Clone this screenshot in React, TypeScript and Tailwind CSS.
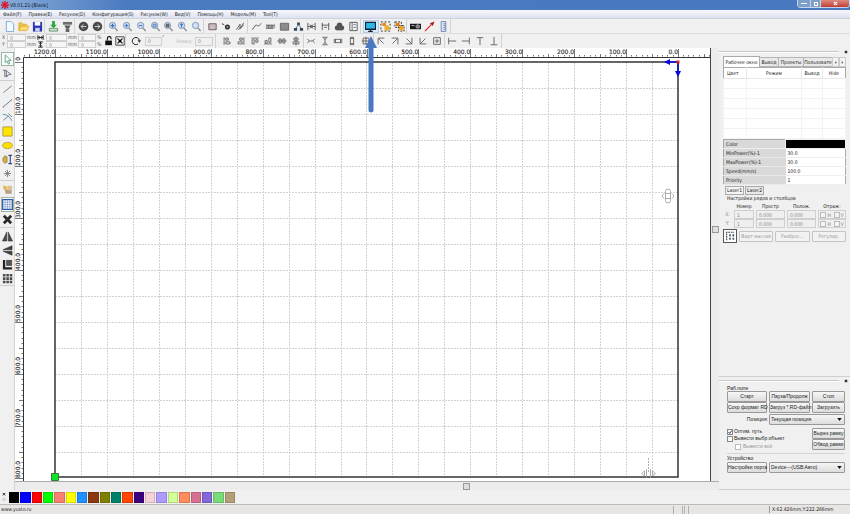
import type { ReactNode } from "react";

const line = { fill: "none", stroke: "#555", strokeWidth: 1 };

const lens = (color: string, inner?: ReactNode) => (
  <g>
    <path d="M7.500 7.500L10.500 10.800" stroke="#8a8f98" strokeWidth="1.600" />
    <circle cx="5" cy="4.800" r="3.400" fill="#cfe0f4" stroke="#7f92b0" />
    <g stroke={color} fill="none">{inner}</g>
  </g>
);

const ICONS: Record<string, ReactNode> = {
  new: <path d="M2.500 .5h5l3 3v8h-8z" fill="#f2faff" stroke="#77a9d6" />,
  open: <g><path d="M1 10V2h3l1 1.500h4V6" fill="#f4c542" stroke="#d9a32b" strokeWidth=".8" /><path d="M1 10.500l2-5h9l-2.500 5z" fill="#ffdc73" stroke="#d9a32b" strokeWidth=".8" /></g>,
  save: <g><path d="M1 1h10v10.500H1z" fill="#2b36b5" /><path d="M3 1h6v4H3z" fill="#fff" /><path d="M3.500 7.500h5v4h-5z" fill="#c9d0ee" /></g>,
  import: <g><path d="M4.500 0h3v4h2.200L6 7.800 2.300 4h2.200z" fill="#27a844" /><path d="M1.500 8h9v3h-9z" fill="#cfe3cf" stroke="#3f7d4a" strokeWidth=".8" /></g>,
  export: <g><path d="M1 1h10v3H1z" fill="#6d6d6d" /><path d="M2.500 5h7L7.500 8h-3z" fill="#555" /><path d="M4 8h4v4H4z" fill="#666" /></g>,
  undo: <g><circle cx="6" cy="6" r="5.200" fill="#4b4b4b" /><path d="M9 6H3.500M5.800 3.600L3.400 6l2.400 2.400" fill="none" stroke="#ddd" /></g>,
  redo: <g><circle cx="6" cy="6" r="5.200" fill="#4b4b4b" /><path d="M3 6h5.500M6.200 3.600L8.600 6 6.200 8.400" fill="none" stroke="#ddd" /></g>,
  z1: lens("#2f6fc4", <path d="M5 3v4M3 5h4" strokeWidth="1.400" />),
  z2: lens("#2f6fc4", <path d="M5 3v4M3 5h4" />),
  z3: lens("#2f6fc4", <path d="M3 5h4" />),
  z4: lens("#3b74b8", <path d="M3.500 3.500h3v3h-3z" />),
  z5: lens("#555", <path d="M3.500 3.500h3v3h-3z" fill="#777" />),
  z6: lens("#2563c0", <path d="M5 3v4M3.400 4.500L5 3l1.600 1.500" />),
  z7: lens("#9ab"),
  frame: <path d="M2 3h8v6.500H2z" fill="#c9bcc2" stroke="#6d5560" />,
  dot: <g><path d="M1 3l2.500 1" stroke="#333" /><circle cx="7" cy="6.500" r="2.800" fill="#333" /><circle cx="7" cy="6.500" r="1" fill="#aaa" /></g>,
  hatch: <path d="M1.500 9.500l4-6v5l4-6.500M3.500 9.500l6-5" {...line} />,
  curve: <path d="M1 9c2.500 0 2.500-4.500 4.500-4.500S8 7.500 11 2.500" {...line} />,
  bmp: <g><path d="M1 4.500h10v3.500H1z" fill="#aaa" /><path d="M1 4.500h10M1 8h8M4 4.500v3M7.500 4.500v3" stroke="#555" strokeWidth=".9" /></g>,
  gray: <path d="M1.500 2.500h9v7.500h-9z" fill="#8c8c8c" stroke="#666" />,
  tree: <g fill="#345"><path d="M4.500 1.500h3v3h-3zM1 7.500h3.500v3H1zM7.500 7.500H11v3H7.500z" /><path d="M6 4L3 8M6 4l3 4" stroke="#4a758a" /></g>,
  join: <path d="M2 2v8M10 2v8M2 6h8M4 4l3 2-3 2M8 4L5 6l3 2" {...line} />,
  joinh: <path d="M2.500 2v8M9.500 2v8M2 4.500h8M4.500 7h3" {...line} />,
  cloud: <g fill="#555"><circle cx="6" cy="4.500" r="3" /><circle cx="3.500" cy="7.500" r="2.700" /><circle cx="8.500" cy="7.500" r="2.700" /><path d="M3 8h6v2.200H3z" /></g>,
  card: <g><path d="M2 1.500h8v9H2z" fill="#f4f4f4" stroke="#555" /><path d="M4.500 2v8M6 4h2.500M6 7h2.500" stroke="#667" /></g>,
  monitor: <g><path d="M.5 1.500h11v7.500H.5z" fill="#29b8e8" stroke="#123" strokeWidth="1.400" /><path d="M6 9v2M3.500 11.300h5" stroke="#123" strokeWidth="1.300" /></g>,
  group: <g><path d="M1 1h10v10H1z" fill="none" stroke="#222" strokeDasharray="2 2" /><path d="M2.500 2h4v3.500h-4z" fill="#e98a1d" /><circle cx="7.500" cy="7.500" r="2.800" fill="#f1ae26" /></g>,
  ungroup: <g><path d="M1 1h7v6H1zM5 5h6v6H5z" fill="none" stroke="#222" strokeDasharray="2 1.500" /><path d="M2 2h4v3.500H2z" fill="#e07d18" /><circle cx="8" cy="8" r="2.600" fill="#f1a31f" /></g>,
  machine: <g><path d="M0 3h12v6H0z" fill="#181818" /><circle cx="8.500" cy="6" r="2" fill="#777" stroke="#ddd" strokeWidth=".6" /><path d="M1.500 5h3.500" stroke="#bbb" /></g>,
  laser: <g><path d="M1 11l7-7" stroke="#e02525" strokeWidth="1.300" /><path d="M6.500 2.500L11.500 .5 9.500 5.500z" fill="#a12" /></g>,
  ruler: <g><path d="M3.500 .5h5v11h-5z" fill="#dce6fa" stroke="#7383b5" /><path d="M6 3h2M6 5h2M6 7h2M6 9h2" stroke="#567" strokeWidth=".8" /></g>,
  al: <path d="M2.500 1.500v9M4.500 2.500h3v2.500h-3zM4.500 7h5v2.500h-5z" {...line} />,
  ar: <path d="M9.500 1.500v9M4.500 2.500h3v2.500h-3zM2.500 7h5v2.500h-5z" {...line} />,
  at: <path d="M1.500 2.500h9M2.500 4.500h2.500v5H2.500zM7 4.500h2.500v3H7z" {...line} />,
  ab: <path d="M1.500 9.500h9M2.500 5.500h2.500v3H2.500zM7 2.500h2.500v5H7z" {...line} />,
  ach: <path d="M.5 6h11M2.500 3.500h2.500v5H2.500zM7 3.500h2.500v5H7z" {...line} />,
  acv: <path d="M6 .5v11M3.500 2.500h5v2.500h-5zM2.500 7h7v2.500h-7z" {...line} />,
  dh: <path d="M1.500 3.500L4 6 1.500 8.500M10.500 3.500L8 6l2.500 2.500M4 6h4" {...line} />,
  dv: <path d="M3 1.500h6M3 10.500h6M6 4v4M4 2l2 2.500L8 2M4 10l2-2.500L8 10" {...line} />,
  sw: <path d="M1.500 4h9v4h-9zM3 4v4M9 4v4" {...line} />,
  sh: <path d="M4 1.500h4v9H4zM4 3h4M4 9h4" {...line} />,
  same: <path d="M2.500 2.500h7v7h-7zM6 1v10M1 6h10" {...line} />,
  nw: <path d="M2.500 10V2.500H10M3 3l6 6" {...line} />,
  ne: <path d="M2 2.500h7.500V10M9 3L3 9" {...line} />,
  se: <path d="M2 9.500h7.500V2M9 9L3 3" {...line} />,
  sw2: <path d="M2.500 2v7.500H10M3 9l6-6" {...line} />,
  ctr: <path d="M2 2h8v8H2zM6 3.500v5M3.500 6h5" {...line} />,
  tl: <path d="M2 2v8M2 6h9" {...line} />,
  tr: <path d="M10 2v8M10 6H1" {...line} />,
  tt: <path d="M2 2h8M6 2v9" {...line} />,
  tb: <path d="M2 10.500h8M6 10V1" {...line} />,
  lock: <g><path d="M1.500 5.500h8V11h-8z" fill="#111" /><path d="M4 5.500V3a2.200 2.200 0 0 1 4.500 0v1" fill="none" stroke="#111" strokeWidth="1.300" /></g>,
  anchor: <g><path d="M1 1h10v10H1z" fill="#fff" stroke="#222" /><path d="M3 3l6 6M9 3L3 9" stroke="#222" strokeWidth="1.300" /><path d="M4.500 4.500h3v3h-3z" fill="#000" /></g>,
  rotate: <g><path d="M8.500 9.500A4.300 4.300 0 1 1 10 5" fill="none" stroke="#222" strokeWidth="1.200" /><path d="M8 5h4l-2 3z" fill="#222" /></g>,
  warr: <path d="M1.500 2v8M10.500 2v8M2 6h8M4.500 4L2.500 6l2 2M7.500 4l2 2-2 2" fill="none" stroke="#111" strokeWidth="1.500" />,
  harr: <path d="M2 1.500h8M2 10.500h8M6 2v8M4 4.500l2-2 2 2M4 7.500l2 2 2-2" fill="none" stroke="#111" strokeWidth="1.500" />,
  pick: <path d="M3.500 1v8.500l2-2 1.500 3.500 1.500-.7L7 7h3z" fill="#fff" stroke="#4e9a72" strokeWidth=".9" />,
  node: <path d="M1 2.500h4M3 2.500v7l2-1.500M4.500 3l5.500 4-3.500.5L5 10z" fill="none" stroke="#5c6674" strokeWidth=".9" />,
  seg: <path d="M1.500 9.500l9-7.500" stroke="#6f7f95" strokeWidth="1" />,
  poly: <path d="M1 10l9.500-8M1 10h1M10 2h1" stroke="#65758c" strokeWidth="1" />,
  bezier: <g fill="none"><path d="M1 2.500c6 .5 8 4 9.500 7" stroke="#4d87a6" /><path d="M1.500 9l6-5M7 1.500l4 4" stroke="#6e8293" /></g>,
  rect: <path d="M1 1h10v10H1z" fill="#ffe500" stroke="#b09a3f" />,
  ellipse: <ellipse cx="6" cy="6" rx="5.200" ry="3.300" fill="#ffe100" stroke="#c09c35" />,
  text: <g><path d="M1 5l2-3 2.500 1v6L3 10 1 8z" fill="#d9ae3c" stroke="#78713f" strokeWidth=".7" /><path d="M7 1.500h4M9 1.500v9M7 10.500h4" stroke="#2c4788" strokeWidth="1.200" /></g>,
  star: <path d="M6 2v8M2 6h8M3.300 3.300l5.400 5.400M8.700 3.300L3.300 8.700" stroke="#777" strokeWidth=".9" />,
  camera: <g><path d="M1 1.500l4 1 1 3-4 1z" fill="#e8b54d" /><path d="M3 6h7.500v4.500H4z" fill="#b5a084" /><path d="M6 2h5v5H6z" fill="#dbc28e" /></g>,
  grid: <g><path d="M.7 .7h10.600v10.600H.7z" fill="#fff" stroke="#2b59ad" strokeWidth="1.300" /><path d="M3.500 1v10M6 1v10M8.500 1v10M1 3.500h10M1 6h10M1 8.500h10" stroke="#7593cb" strokeWidth=".7" /></g>,
  cross: <path d="M2 2l8 8M10 2l-8 8" stroke="#2b2b2b" strokeWidth="3" />,
  mirh: <path d="M5.200 1v10H.5zM6.800 1v10h4.700z" fill="#4d4d4d" stroke="#222" strokeWidth=".5" />,
  mirv: <path d="M11 5.200H1L11 .8zM11 6.800H1l10 4.400z" fill="#3f3f3f" stroke="#222" strokeWidth=".5" />,
  corner: <g><path d="M1 1h2.500v8H11v2.500H1z" fill="#222" /><path d="M4.500 1H11v6.500H4.500z" fill="#555" /></g>,
  array: <path d="M1 1h2.800v2.800H1zM4.700 1h2.800v2.800H4.700zM8.400 1h2.800v2.800H8.400zM1 4.700h2.800v2.800H1zM4.700 4.700h2.800v2.800H4.700zM8.400 4.700h2.800v2.800H8.400zM1 8.400h2.800v2.800H1zM4.700 8.400h2.800v2.800H4.700zM8.400 8.400h2.800v2.800H8.400z" fill="#4c4c4c" />,
  varray: <g><path d="M1 1.500h10M2 3v8" stroke="#333" strokeDasharray="2 1" strokeWidth="1.300" /><path d="M5 4h2v2.500H5zM9 4h2v2.500H9zM5 8h2v2.500H5zM9 8h2v2.500H9z" fill="#456" /></g>,
};

function Icon({ name, className = "size-3" }: { name: string; className?: string }) {
  return (
    <svg viewBox="0 0 12 12" className={`${className} shrink-0`} aria-hidden="true">
      {ICONS[name]}
    </svg>
  );
}

function ToolGroup({ names, width, small }: { names: string[]; width: string; small?: boolean }) {
  return (
    <div className={`flex h-full shrink-0 items-center border-r border-[#d2d2d2] ${width}`}>
      {names.map((n) => (
        <button key={n} type="button" aria-label={n} className={`flex h-[13px] min-w-0 flex-1 items-center justify-center ${n === "monitor" ? "border border-[#b4cce6] bg-[#dbeaf8]" : ""}`}>
          <Icon name={n} className={small ? "size-[10px]" : "size-[11px]"} />
        </button>
      ))}
    </div>
  );
}

function NumberBox({ label, value, width, gray }: { label: string; value: string; width: string; gray?: boolean }) {
  return (
    <input aria-label={label} defaultValue={value} className={`h-full min-w-0 shrink-0 border border-[#cfcfcf] px-0.5 text-[#888] ${gray ? "bg-[#efefef]" : "bg-[#f6f6f6]"} ${width}`} />
  );
}

const MENUS = ["Файл(F)", "Правка(E)", "Рисунок(D)", "Конфигурация(S)", "Рисунок(W)", "Вид(V)", "Помощь(H)", "Модель(M)", "Tool(T)"];

function TopBars() {
  return (
    <header className="shrink-0">
      <div className="flex h-[10px] items-center bg-gradient-to-r from-[#88abd8] via-[#4a7ac0] via-15% to-[#4878bf] pl-px">
        <svg viewBox="0 0 8 8" className="size-2" aria-hidden="true">
          <path d="M4 0v8M0 4h8M1 1l6 6M7 1L1 7" stroke="#d31f33" strokeWidth="1.500" />
        </svg>
        <h1 className="ml-px flex-1 text-[#101828]">V8.01.21-[Blank]</h1>
        <div className="flex h-[8px] self-start overflow-hidden rounded-b-sm border border-t-0 border-[#c4d5ec]">
          <button type="button" aria-label="Minimize" className="flex w-[12px] items-center justify-center bg-[#7d9fca]"><span className="h-px w-1.5 bg-white" /></button>
          <button type="button" aria-label="Restore" className="flex w-[11px] items-center justify-center border-x border-[#c4d5ec] bg-[#7d9fca]"><span className="size-1 border border-white" /></button>
          <button type="button" aria-label="Close" className="flex w-[28px] items-center justify-center bg-gradient-to-b from-[#dc8a80] to-[#c23a30]">
            <svg viewBox="0 0 6 6" className="size-[5px]"><path d="M1 1l4 4M5 1L1 5" stroke="#fff" strokeWidth="1.400" /></svg>
          </button>
        </div>
      </div>
      <nav className="flex h-[9px] items-center gap-[7px] border-b border-[#d0d3de] bg-gradient-to-b from-[#f8f9fd] to-[#dce1f0] pl-[3px]">
        {MENUS.map((m) => (
          <button key={m} type="button" className="whitespace-nowrap">{m}</button>
        ))}
      </nav>
      <div className="flex h-[14px] items-center gap-[2px] bg-[#f0f0f0] pl-[3px]">
        <ToolGroup width="w-[42px]" names={["new", "open", "save"]} />
        <ToolGroup width="w-[28px]" names={["import", "export"]} />
        <ToolGroup width="w-[28px]" names={["undo", "redo"]} />
        <ToolGroup width="w-[97px]" names={["z1", "z2", "z3", "z4", "z5", "z6", "z7"]} />
        <ToolGroup width="w-[42px]" names={["frame", "dot", "hatch"]} />
        <ToolGroup width="w-[111px]" names={["curve", "bmp", "gray", "tree", "join", "joinh", "cloud", "card"]} />
        <ToolGroup width="w-[44px]" names={["monitor", "group", "ungroup"]} />
        <ToolGroup width="w-[42px]" names={["machine", "laser", "ruler"]} />
      </div>
      <div className="flex h-[15px] items-center border-t border-[#dcdcdc] bg-[#f0f0f0] text-[#555]">
        <div className="grid h-[14px] shrink-0 grid-cols-[7px_19px_11px_9px_21px_11px_18px_8px] grid-rows-2 items-center leading-[7px]">
          <span className="pl-0.5">X</span><NumberBox label="X" value="0" width="w-full" /><span className="pl-px">mm</span>
          <Icon name="warr" className="size-[7px]" />
          <NumberBox label="Width" value="0" width="w-full" /><span className="pl-px">mm</span>
          <NumberBox label="Scale X" value="0" width="w-full" /><span className="pl-px">%</span>
          <span className="pl-0.5">Y</span><NumberBox label="Y" value="0" width="w-full" /><span className="pl-px">mm</span>
          <Icon name="harr" className="size-[7px]" />
          <NumberBox label="Height" value="0" width="w-full" /><span className="pl-px">mm</span>
          <NumberBox label="Scale Y" value="0" width="w-full" /><span className="pl-px">%</span>
        </div>
        <ToolGroup width="w-[22px]" names={["lock", "anchor"]} small />
        <div className="mr-[4px] flex h-full w-[90px] shrink-0 items-center border-r border-[#d2d2d2] pl-[5px]">
          <Icon name="rotate" className="size-[10px]" />
          <div className="ml-1 h-[9px]"><NumberBox label="Angle" value="0" width="w-[17px]" gray /></div>
          <span className="self-start">°</span>
          <label htmlFor="num" className="ml-auto text-[#bbb]">Номер:</label>
          <input id="num" defaultValue="0" className="mr-0.5 ml-0.5 h-[9px] w-[18px] border border-[#cfcfcf] bg-[#efefef] px-0.5 text-[#888]" />
        </div>
        <ToolGroup width="w-[84px]" names={["al", "ar", "at", "ab", "ach", "acv"]} small />
        <ToolGroup width="w-[70px]" names={["dh", "dv", "sw", "sh", "same"]} small />
        <ToolGroup width="w-[71px]" names={["nw", "ne", "se", "sw2", "ctr"]} small />
        <ToolGroup width="w-[57px]" names={["tl", "tr", "tt", "tb"]} small />
      </div>
    </header>
  );
}

function SideTools() {
  const groups = [
    ["pick", "node"],
    ["seg", "poly", "bezier", "rect", "ellipse", "text", "star"],
    ["camera", "grid", "cross"],
    ["mirh", "mirv", "corner", "array"],
  ];
  return (
    <aside className="flex w-[15px] shrink-0 flex-col border-r border-[#d4d4d4] bg-[#f0f0f0] pt-[3px]">
      {groups.map((g) => (
        <div key={g[0]} className="flex flex-col items-center border-b border-[#cfcfcf] pt-px">
          {g.map((n) => (
            <button key={n} type="button" aria-label={n} className={`flex items-center justify-center ${g[0] === "camera" ? "h-[15px]" : "h-[14px]"} w-[13px] ${n === "pick" || n === "grid" ? "border border-[#9bb5a8] bg-[#f8fcfa]" : ""}`}>
              <Icon name={n} className="size-[11px]" />
            </button>
          ))}
        </div>
      ))}
    </aside>
  );
}

const range = (n: number) => Array.from({ length: n }, (_, i) => i);
const GRID = 26;

/* Drawing bed with its two rulers; the origin is the bed's top right corner. */
function Workspace() {
  const right = 663;
  const left = 40;
  const top = 14;
  const bottom = 430;
  return (
    <svg className="h-[433px] w-full" aria-label="Drawing area">
      <rect x="0" y="0" width="100%" height="433" fill="#fff" />
      <g stroke="#777">
        {range(133).map((i) => {
          const x = Math.round(right + 31 - i * 5.19) + 0.5;
          return x > 9 ? <path key={i} d={`M${x} 7v1.500`} /> : null;
        })}
        {range(27).map((i) => {
          const x = Math.round(right + GRID - i * 25.96) + 0.5;
          return x > 9 ? <path key={i} d={`M${x} ${i % 2 ? 1 : 6}V9`} /> : null;
        })}
        {range(83).map((i) => <path key={i} d={`M6.500 ${Math.round(top + i * 5.2) + 0.5}h1.500`} />)}
        {range(17).map((i) => <path key={i} d={`M${i % 2 ? 4 : 0} ${top + i * GRID + 0.5}H8`} />)}
      </g>
      <g fontFamily="DejaVu Sans, sans-serif" fontSize="6" fill="#222" stroke="#222" strokeWidth=".1" textAnchor="end">
        {range(13).map((i) => (
          <text key={i} x={right - i * 51.92} y="6">{i * 100}.0</text>
        ))}
        <text x="-9" y="5" transform="rotate(-90)">0</text>
      </g>
      <g fontFamily="DejaVu Sans, sans-serif" fontSize="6" fill="#222" stroke="#222" strokeWidth=".1">
        {range(8).map((i) => (
          <text key={i} x={-(top + (i + 1) * 52)} y="5" transform="rotate(-90)">{(i + 1) * 100}.0</text>
        ))}
      </g>
      <path d="M8.500 433V9.500H2000" fill="none" stroke="#333" />
      <g stroke="#d2d2d2" strokeDasharray="2 1">
        {range(23).map((i) => {
          const x = Math.round(right - (i + 1) * 25.96) + 0.5;
          return <path key={i} d={`M${x} ${top}V${bottom}`} />;
        })}
        {range(15).map((i) => <path key={i} d={`M${left} ${top + (i + 1) * GRID + 0.5}H${right}`} />)}
      </g>
      <rect x={left} y={top} width={right - left} height={bottom - top - 1} fill="none" stroke="#333" strokeWidth="1.500" />
      <path d={`M${left - 3.5} ${bottom - 4.5}h7v7h-7z`} fill="#0ee52a" stroke="#347a3a" />
      <path d="M663 14H654M663 14v9" stroke="#0808e0" strokeWidth="1.500" />
      <path d="M649 14l6-3v6zM663 29l-3-6h6z" fill="#0808e0" />
      <path d="M661.500 12.500h3v3h-3z" fill="#d22" />
      <g fill="#fff" stroke="#999" strokeWidth=".8">
        <rect x="650.500" y="141" width="5" height="14" rx="2.500" />
        <path d="M650.500 145.500h5M650.500 150.500h5M649 145.500l-2 2.500 2 2.500M657 145.500l2 2.500-2 2.500" />
        <path d="M633.500 410v14" strokeDasharray="2 1" />
        <path d="M631.500 421v9M635.500 421v9M629.500 423l-3 2.500 3 2.500zM637.500 423l3 2.500-3 2.500z" />
      </g>
    </svg>
  );
}

function Grip() {
  return (
    <div className="flex h-[8px] items-center gap-1 pr-0.5">
      <span className="h-[2px] flex-1 border-y border-y-[#c8c8c8] border-b-white" />
      <button type="button" aria-label="Close panel" className="flex size-[5px] items-center justify-center">
        <svg viewBox="0 0 5 5" className="size-[4px]"><path d="M1 1l3 3M4 1L1 4" stroke="#222" strokeWidth="1.300" /></svg>
      </button>
    </div>
  );
}

const BUTTON = "h-[11px] min-w-0 whitespace-nowrap rounded-[1px] border border-[#999] bg-gradient-to-b from-[#f7f7f7] to-[#dcdcdc] text-center leading-[9px]";
const FLAT = "h-[11px] min-w-0 whitespace-nowrap rounded-[1px] border border-[#c4c4c4] bg-[#f2f2f2] text-[#999] leading-[9px]";

function LayerPanel() {
  const props = [["MinPower(%)-1", "30.0"], ["MaxPower(%)-1", "30.0"], ["Speed(mm/s)", "100.0"], ["Priority", "1"]];
  return (
    <section className="px-[4px]">
      <div className="flex h-[11px] items-end">
        <button type="button" className="h-[11px] w-[37px] border border-b-0 border-[#aaa] bg-white whitespace-nowrap">Рабочее окно</button>
        <button type="button" className="h-[10px] w-[19px] border border-l-0 border-[#b5b5b5] bg-[#e9e9e9]">Вывод</button>
        <button type="button" className="h-[10px] w-[25px] border border-l-0 border-[#b5b5b5] bg-[#e9e9e9]">Проекты</button>
        <button type="button" className="h-[10px] min-w-0 flex-1 border border-x-0 border-[#b5b5b5] bg-[#e9e9e9] text-center">Пользовате</button>
        <button type="button" aria-label="Previous tab" className="flex h-[10px] w-[7px] items-center justify-center border border-[#ccc] bg-[#f4f4f4]"><svg viewBox="0 0 4 4" className="size-[3px]"><path d="M3 0v4L1 2z" fill="#555" /></svg></button>
        <button type="button" aria-label="Next tab" className="flex h-[10px] w-[7px] items-center justify-center border border-[#ccc] bg-[#f4f4f4]"><svg viewBox="0 0 4 4" className="size-[3px]"><path d="M1 0v4l2-2z" fill="#555" /></svg></button>
      </div>
      <table className="w-full table-fixed border-collapse border border-[#aaa] bg-white">
        <thead>
          <tr className="h-[11px]">
            <th className="w-[23px] border-b border-[#e4e4e4] pl-[3px] text-left font-normal">Цвет</th>
            <th className="border-x border-b border-[#e8e8e8] font-normal">Режим</th>
            <th className="w-[21px] border-b border-[#e4e4e4] font-normal">Вывод</th>
            <th className="w-[23px] border-b border-l border-[#e8e8e8] font-normal">Hide</th>
          </tr>
        </thead>
        <tbody>
          {range(6).map((i) => (
            <tr key={i} className="h-[10px]">
              {range(4).map((c) => <td key={c} className="border border-[#f3f3f3]" />)}
            </tr>
          ))}
        </tbody>
      </table>
      <table className="w-full table-fixed border-collapse border border-[#aaa] bg-white">
        <tbody>
          <tr className="h-[9px]">
            <th className="w-[62px] border-b border-[#eee] bg-[#d9d9d9] pl-0.5 text-left font-normal">Color</th>
            <td className="border border-[#eee] bg-black" />
          </tr>
          {props.map(([k, v]) => (
            <tr key={k} className="h-[9px]">
              <th className="border-b border-[#e9e9e9] bg-[#d9d9d9] pl-0.5 text-left font-normal">{k}</th>
              <td className="border-b border-[#eee] pl-0.5">{v}</td>
            </tr>
          ))}
        </tbody>
      </table>
      <div className="mt-px flex gap-px pl-0.5">
        <button type="button" className="h-[9px] w-[19px] border border-[#aaa] bg-[#f4f4f4]">Laser1</button>
        <button type="button" className="h-[9px] w-[19px] border border-[#aaa] bg-[#e8e8e8]">Laser2</button>
      </div>
      <h2 className="pl-[4px] leading-[7px]">Настройки рядов и столбцов</h2>
      <div className="grid grid-cols-[9px_20px_1fr_1fr_28px] grid-rows-[8px_9px_9px] gap-x-[2px] text-center leading-[8px]">
        <span /><span>Номер</span><span>Простр</span><span>Полож.</span><span>Отраж:</span>
        {["X", "Y"].map((axis) => (
          <div key={axis} className="contents text-[#888]">
            <span className="h-[9px] leading-[9px]">{axis}:</span>
            <NumberBox label={`${axis} count`} value="1" width="w-full" gray />
            <NumberBox label={`${axis} spacing`} value="0.000" width="w-full" gray />
            <NumberBox label={`${axis} offset`} value="0.000" width="w-full" gray />
            <div className="flex items-center justify-around border border-[#d0d0d0]">
              {["H", "V"].map((f) => (
                <label key={f} className="flex items-center gap-px"><input type="checkbox" disabled className="size-[6px] appearance-none border border-[#bbb] bg-[#f4f4f4]" />{f}</label>
              ))}
            </div>
          </div>
        ))}
      </div>
      <div className="mt-px flex items-center gap-[2px]">
        <button type="button" aria-label="Array" className="flex size-[14px] shrink-0 items-center justify-center border border-[#555] bg-white"><Icon name="varray" className="size-[10px]" /></button>
        <button type="button" className={`${FLAT} flex-1`}>Вирт массив</button>
        <button type="button" className={`${FLAT} flex-1`}>Разброс...</button>
        <button type="button" className={`${FLAT} flex-1`}>Регулир.</button>
      </div>
    </section>
  );
}

function Dropdown({ label, value, id }: { label?: string; value: string; id: string }) {
  return (
    <div className="relative min-w-0 flex-1">
      <select id={id} aria-label={label} className="h-[11px] w-full appearance-none rounded-[1px] border border-[#999] bg-gradient-to-b from-[#f5f5f5] to-[#dedede] pl-px leading-[9px]">
        <option>{value}</option>
      </select>
      <svg viewBox="0 0 6 4" className="pointer-events-none absolute top-[4px] right-[3px] h-[3px] w-[5px]"><path d="M0 0h6L3 4z" fill="#111" /></svg>
    </div>
  );
}

function JobPanel() {
  return (
    <section className="border-y border-[#cfcfcf] pb-[16px] font-['Liberation_Sans',sans-serif]">
      <Grip />
      <div className="pr-[5px] pl-[8px]">
        <h2 className="leading-[6px]">Раб.поле</h2>
        <div className="grid grid-cols-[40px_1fr_33px] gap-x-[2px]">
          <button type="button" className={BUTTON}>Старт</button>
          <button type="button" className={BUTTON}>Пауза/Продолж</button>
          <button type="button" className={BUTTON}>Стоп</button>
          <button type="button" className={BUTTON}>Сохр формат RD</button>
          <button type="button" className={BUTTON}>Загруз *.RD-файл</button>
          <button type="button" className={BUTTON}>Загрузить</button>
        </div>
        <div className="mt-px flex items-center">
          <label htmlFor="pos" className="w-[42px] pr-px text-right">Позиция:</label>
          <Dropdown id="pos" value="Текущая позиция" />
        </div>
        <div className="mt-[3px] flex justify-between">
          <div className="flex flex-col">
            <label className="flex h-[7px] items-center gap-px"><span className="relative flex size-[6px]"><input type="checkbox" defaultChecked className="size-[6px] appearance-none border border-[#888] bg-white" /><svg viewBox="0 0 6 6" className="pointer-events-none absolute inset-0 size-[6px]"><path d="M1.500 3l1.200 1.500L4.800 1.500" fill="none" stroke="#2c3f78" /></svg></span>Оптим. путь</label>
            <label className="flex h-[7px] items-center gap-px"><input type="checkbox" className="size-[6px] appearance-none border border-[#888] bg-white" />Вывести выбр объект</label>
            <label className="mt-px flex h-[7px] items-center gap-[2px] pl-[8px] text-[#999]"><input type="checkbox" disabled className="size-[6px] appearance-none border border-[#bbb] bg-white" />Вывести всё</label>
          </div>
          <div className="flex w-[33px] flex-col">
            <button type="button" className={BUTTON}>Вырез рамку</button>
            <button type="button" className={BUTTON}>Обвод рамки</button>
          </div>
        </div>
        <h2 className="mt-[3px] border-t border-[#d5d5d5] leading-[8px]">Устройство</h2>
        <div className="flex gap-[2px]">
          <button type="button" className={`${BUTTON} w-[40px]`}>Настройки порта</button>
          <Dropdown id="device" label="Устройство" value="Device---(USB:Авто)" />
        </div>
      </div>
    </section>
  );
}

const COLORS = ["#000000", "#0000ff", "#ff0000", "#00ff00", "#fa8072", "#ffff00", "#1e90ff", "#8b3a0e", "#808000", "#008066", "#ff4500", "#3c0080", "#f8d0d8", "#ad9aff", "#d2ff96", "#ff8c5a", "#d87093", "#8468d8", "#78dc78", "#b4a078"];

export default function App() {
  return (
    <div className="relative flex h-screen flex-col overflow-hidden bg-[#f0f0f0] font-['DejaVu_Sans_Condensed','DejaVu_Sans',sans-serif] text-[5px] leading-[7px] text-[#222]">
      <TopBars />
      <main className="flex min-h-0 flex-1">
        <SideTools />
        <div className="flex min-w-0 flex-1 flex-col overflow-hidden">
          <div className="flex">
            <div className="min-w-0 flex-1 overflow-hidden border-r border-[#444]"><Workspace /></div>
            <div className="flex w-[8px] shrink-0 flex-col items-center bg-[#ececec] pt-[178px]">
              <span className="h-[7px] w-[7px] border border-[#999] bg-[#ddd]" />
            </div>
          </div>
          <div className="flex h-[9px] items-center justify-center border-t border-[#aaa] bg-[#ececec] pl-[199px]">
            <span className="h-[7px] w-[7px] border border-[#999] bg-[#ddd]" />
          </div>
        </div>
        <div className="flex w-[131px] shrink-0 flex-col justify-between bg-[#f0f0f0]">
          <div><Grip /><LayerPanel /></div>
          <JobPanel />
        </div>
      </main>
      <footer className="shrink-0">
        <div className="flex h-[14px] items-center bg-[#f0f0f0] pl-[2px]">
          <button type="button" aria-label="Close palette" className="flex w-[7px]"><svg viewBox="0 0 5 10" className="h-[8px] w-[4px]"><path d="M1 0l3 3M4 0L1 3" stroke="#222" strokeWidth="1.200" /><path d="M1.500 6v4M3.500 6v4" stroke="#bbb" /></svg></button>
          <div className="flex h-[11px] w-[226px] gap-px">
            {COLORS.map((c) => (
              <button key={c} type="button" aria-label={c} className="flex-1 border border-black/15" style={{ backgroundColor: c }} />
            ))}
          </div>
        </div>
        <div className="flex h-[10px] items-center border-t border-[#bbb] bg-[#e9e5e5] px-px">
          <span className="flex-1">www.yusto.ru</span>
          <span className="mr-px h-[8px] w-[10px] border-x border-[#b5b0b0]" />
          <span className="mr-[80px] h-[8px] w-[5px] border-x border-[#b5b0b0]" />
          <span className="w-[80px] border-l border-[#999] pl-0.5">X:62.426mm,Y:222.266mm</span>
        </div>
      </footer>
      <svg viewBox="0 0 12 78" className="pointer-events-none absolute top-[36px] left-[365px] h-[78px] w-[12px]" aria-hidden="true">
        <path d="M6 0l6 12H8.500v62.500a2.500 2 0 0 1-5 0V12H0z" fill="#4a78c3" />
      </svg>
    </div>
  );
}
